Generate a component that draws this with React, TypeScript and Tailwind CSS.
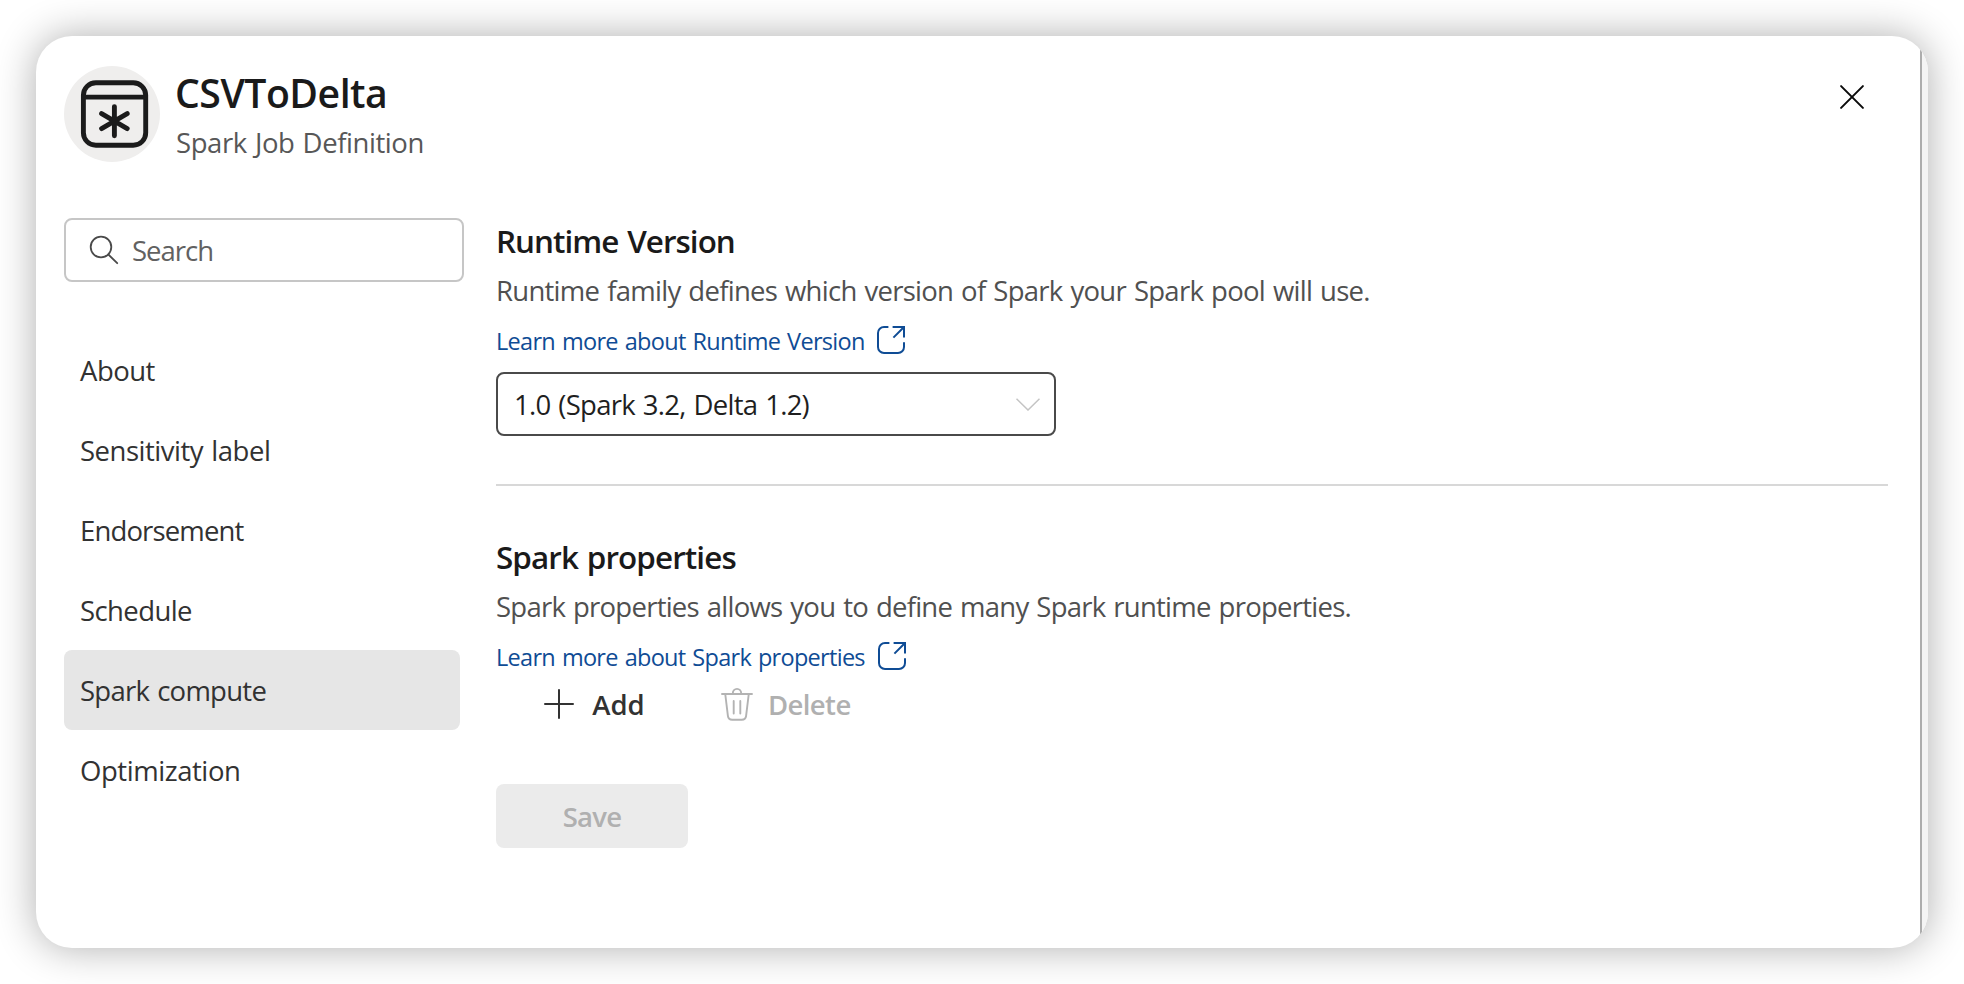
import React from 'react';

const navItems = [
  { label: 'About', tracking: 'tracking-[-0.5px]' },
  { label: 'Sensitivity label', tracking: 'tracking-[-0.48px]' },
  { label: 'Endorsement', tracking: 'tracking-[-0.85px]' },
  { label: 'Schedule', tracking: 'tracking-[-0.6px]' },
  { label: 'Spark compute', tracking: 'tracking-[-0.73px]', selected: true },
  { label: 'Optimization', tracking: 'tracking-[-0.44px]' },
];

function JobIcon() {
  return (
    <svg viewBox="64 66 96 96" className="size-24 shrink-0" fill="none" stroke="#1b1b1b" strokeWidth="4.9" strokeLinecap="round">
      <circle cx="112" cy="114" r="48" fill="#efeeed" stroke="none" />
      <rect x="83.4" y="82.7" width="62.3" height="62.6" rx="12.5" />
      <path d="M84 97.1H145" strokeLinecap="butt" />
      <path d="M114.4 106.6V135.7M101.6 113.6L127.2 128.6M127.2 113.6L101.6 128.6" />
    </svg>
  );
}

function SearchIcon() {
  return (
    <svg viewBox="0 0 30 30" className="size-[30px] shrink-0" fill="none" stroke="#4a4a4a" strokeWidth="1.8">
      <circle cx="12" cy="12" r="10.3" />
      <path d="M19.4 19.5L28.2 28.2" strokeLinecap="round" />
    </svg>
  );
}

function CloseIcon() {
  return (
    <svg viewBox="0 0 24 24" className="size-6" fill="none" stroke="#0b0b0b" strokeWidth="2" strokeLinecap="round">
      <path d="M1.1 1.1L22.9 22.9M22.9 1.1L1.1 22.9" />
    </svg>
  );
}

function OpenIcon() {
  return (
    <svg viewBox="0 0 28 28" className="size-7 shrink-0" fill="none" stroke="#0f4c95" strokeWidth="2">
      <path d="M11.4 1H7A6 6 0 0 0 1 7V21A6 6 0 0 0 7 27H21A6 6 0 0 0 27 21V16.2" />
      <path d="M15.6 1H27V11.4M27 1L16.4 11.6" />
    </svg>
  );
}

function TrashIcon() {
  return (
    <svg viewBox="0 0 32 34" className="h-[34px] w-8" fill="none" stroke="#b3b3b3" strokeWidth="1.9" strokeLinecap="round">
      <path d="M1 7H31M11.8 6.5A4.2 4.6 0 0 1 20.2 6.5" />
      <path d="M4.3 7.5L6.9 28.8A4.4 4.4 0 0 0 11.2 32.7H20.8A4.4 4.4 0 0 0 25.1 28.8L27.7 7.5" />
      <path d="M12.7 14V26.5M19.3 14V26.5" />
    </svg>
  );
}

export default function App() {
  return (
    <div className="h-[984px] w-[1964px] overflow-hidden bg-white p-9 font-['Open_Sans','Noto_Sans',sans-serif] text-[27.5px] leading-10 whitespace-nowrap [word-spacing:1.5px]">
      <div className="flex h-[912px] overflow-hidden rounded-[36px] bg-white shadow-[0_0_40px_rgba(0,0,0,0.32)]">
        <div className="flex min-w-0 flex-1 flex-col pt-[30px] pr-8 pl-7">
          <header className="flex h-24 items-start">
            <JobIcon />
            <div className="ml-4 flex-1">
              <h1 className="-ml-px pt-px text-[39.2px] leading-[52px] font-semibold tracking-[-0.5px] text-[#1a1a1a]">CSVToDelta</h1>
              <p className="mt-1 tracking-[-0.43px] text-[#575757]">Spark Job Definition</p>
            </div>
            <button className="mt-[19px] mr-6" aria-label="Close">
              <CloseIcon />
            </button>
          </header>

          <div className="mt-14 flex">
            <aside className="w-[400px] shrink-0">
              <div className="flex h-16 items-center rounded-lg border-2 border-[#c6c6c6] pl-[23px]">
                <SearchIcon />
                <span className="ml-[13px] pt-0.5 tracking-[-1px] text-[#616161]">Search</span>
              </div>
              <nav className="mt-12 w-[396px]">
                {navItems.map((n) => (
                  <div
                    key={n.label}
                    className={`flex h-20 items-center rounded-lg pt-0.5 pl-4 text-[#323232] ${n.selected ? 'bg-[#e6e6e6]' : ''}`}
                  >
                    <span className={n.tracking}>{n.label}</span>
                  </div>
                ))}
              </nav>
            </aside>

            <main className="ml-8 min-w-0 flex-1">
              <section>
                <h2 className="text-[31.4px] leading-[45px] font-semibold tracking-[-0.95px] text-[#1a1a1a]">Runtime Version</h2>
                <p className="mt-2 tracking-[-0.73px] text-[#505050]">Runtime family defines which version of Spark your Spark pool will use.</p>
                <a className="mt-3.5 flex h-8 text-[23.5px] leading-8 text-[#0f4c95]">
                  <span className="w-[369px] tracking-[-0.7px]">Learn more about Runtime Version</span>
                  <span className="ml-3 pt-px">
                    <OpenIcon />
                  </span>
                </a>
                <div className="mt-[15px] flex h-16 w-[560px] items-center justify-between rounded-lg border-2 border-[#4a4a4a] pr-3.5 pl-4 text-[#1f1f1f]">
                  <span className="pt-0.5 tracking-[-0.74px]">1.0 (Spark 3.2, Delta 1.2)</span>
                  <svg viewBox="0 0 24 13" className="h-[13px] w-6" fill="none" stroke="#c4c4c4" strokeWidth="1.5">
                    <path d="M0.5 0.8L12 12L23.5 0.8" />
                  </svg>
                </div>
              </section>

              <hr className="mt-12 border-t-2 border-[#d8d8d8]" />

              <section className="mt-12">
                <h2 className="text-[31.4px] leading-[46px] font-semibold tracking-[-0.9px] text-[#1a1a1a]">Spark properties</h2>
                <p className="mt-[7px] tracking-[-0.75px] text-[#505050]">Spark properties allows you to define many Spark runtime properties.</p>
                <a className="mt-3.5 flex h-8 text-[23.5px] leading-8 text-[#0f4c95]">
                  <span className="w-[370px] tracking-[-0.71px]">Learn more about Spark properties</span>
                  <span className="ml-3 pt-px">
                    <OpenIcon />
                  </span>
                </a>
                <div className="mt-[11px] flex h-10 items-center font-semibold">
                  <button className="flex items-center pl-12 text-[#323232]">
                    <svg viewBox="0 0 30 30" className="size-[30px]" stroke="#323232" strokeWidth="2" strokeLinecap="round">
                      <path d="M15 1V29M1 15H29" />
                    </svg>
                    <span className="ml-[18px] w-[53px] pt-0.5">Add</span>
                  </button>
                  <button className="ml-[76px] flex items-center text-[#b0b0b0]">
                    <TrashIcon />
                    <span className="ml-[15px] pt-0.5 tracking-[-0.6px]">Delete</span>
                  </button>
                </div>
                <button className="mt-[60px] flex h-16 w-48 items-center justify-center rounded-lg bg-[#ebebeb] pt-0.5 font-semibold tracking-[-0.75px] text-[#b0b0b0]">Save</button>
              </section>
            </main>
          </div>
        </div>
        <div className="w-2 border-l-2 border-[#adadad] bg-[#f4f4f4]" />
      </div>
    </div>
  );
}
